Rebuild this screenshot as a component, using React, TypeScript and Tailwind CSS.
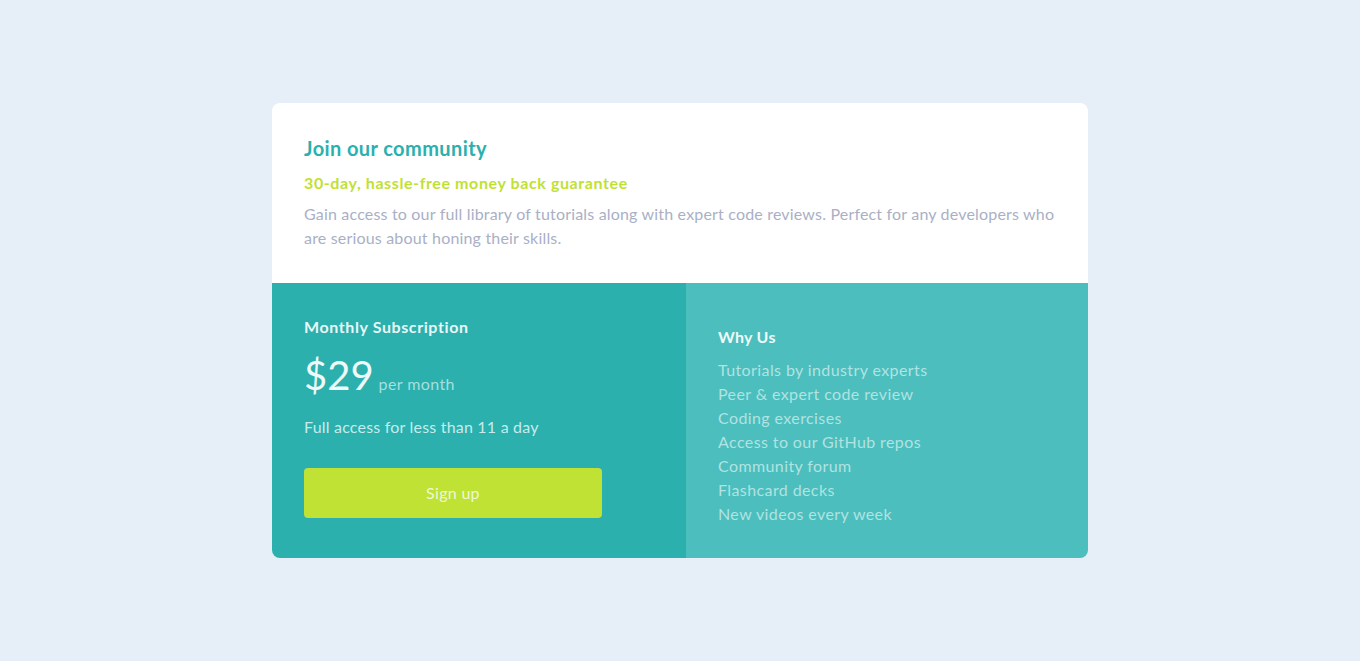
import React from 'react';

const features = [
  'Tutorials by industry experts',
  'Peer & expert code review',
  'Coding exercises',
  'Access to our GitHub repos',
  'Community forum',
  'Flashcard decks',
  'New videos every week',
];

export default function App() {
  return (
    <div className="min-h-screen w-full bg-[#e6eef7] flex justify-center pt-[103px] font-['Lato',sans-serif]">
      <div className="w-[816px] h-[455px] rounded-lg overflow-hidden flex flex-col">
        <div className="bg-white h-[180px] pl-8 pr-5 pt-[31px]">
          <h1 className="text-[20px] font-bold tracking-[0.4px] text-[#2bb0ae] leading-7">Join our community</h1>
          <p className="mt-[9px] text-[16px] font-bold tracking-[0.6px] text-[#bfe133] leading-6">30-day, hassle-free money back guarantee</p>
          <p className="mt-[7px] text-[16px] tracking-[0.18px] text-[#a9b0c6] leading-6">
            Gain access to our full library of tutorials along with expert code reviews. Perfect for any developers who
            are serious about honing their skills.
          </p>
        </div>
        <div className="flex flex-1">
          <div className="w-[414px] bg-[#2bb0ae] px-8 pt-[32px]">
            <h2 className="text-[16px] font-bold tracking-[0.6px] text-[#e8f7f7] leading-6">Monthly Subscription</h2>
            <div className="mt-[14px] flex items-baseline">
              <span className="text-[40px] text-[#eef9f9] leading-[44px]">$29</span>
              <span className="ml-[5px] text-[16px] tracking-[0.4px] text-[#a6dfde]">per month</span>
            </div>
            <p className="mt-[18px] text-[16px] tracking-[0.2px] text-[#c5ecec] leading-6">Full access for less than 11 a day</p>
            <button className="mt-[29px] w-[298px] h-[50px] rounded bg-[#bfe234] text-[16px] tracking-[0.3px] text-[#eef8d8]">Sign up</button>
          </div>
          <div className="flex-1 bg-[#4bbebd] px-8 pt-[42px]">
            <h2 className="text-[16px] font-bold tracking-[0.3px] text-[#eef9f9] leading-6">Why Us</h2>
            <ul className="mt-[9px]">
              {features.map((f) => (
                <li key={f} className="text-[16px] tracking-[0.4px] text-[#b1e3e2] leading-6">{f}</li>
              ))}
            </ul>
          </div>
        </div>
      </div>
    </div>
  );
}
